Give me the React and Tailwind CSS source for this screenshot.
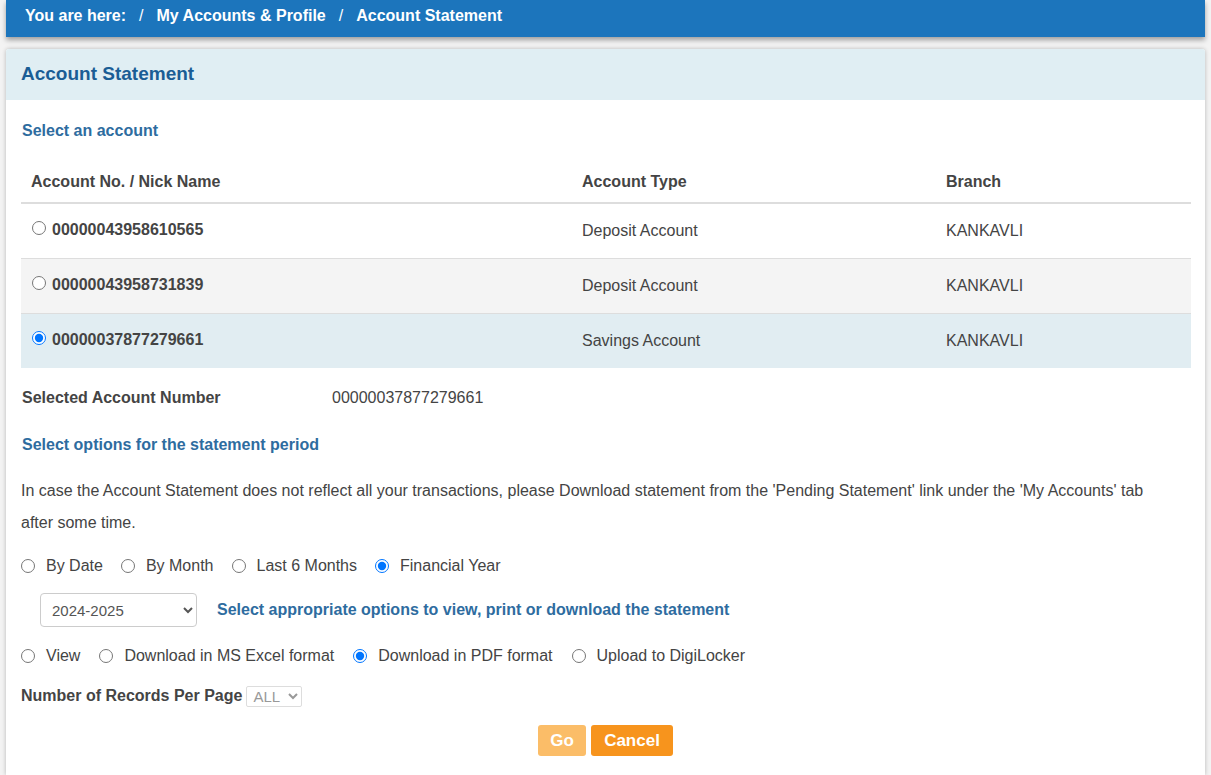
import { useState } from 'react';

const accounts = [
  { no: '00000043958610565', type: 'Deposit Account', branch: 'KANKAVLI' },
  { no: '00000043958731839', type: 'Deposit Account', branch: 'KANKAVLI' },
  { no: '00000037877279661', type: 'Savings Account', branch: 'KANKAVLI' },
];

const rowBg = ['bg-white', 'bg-[#f4f4f4]', 'bg-[#e1edf2]'];

function Radio({ checked, onChange, className = '' }) {
  return (
    <input
      type="radio"
      checked={checked}
      onChange={onChange}
      className={`m-0 h-[14px] w-[14px] shrink-0 accent-[#0075ff] ${className}`}
    />
  );
}

export default function App() {
  const [selected, setSelected] = useState(2);
  const [period, setPeriod] = useState('fy');
  const [format, setFormat] = useState('pdf');

  const periods = [
    { id: 'date', label: 'By Date' },
    { id: 'month', label: 'By Month' },
    { id: 'six', label: 'Last 6 Months' },
    { id: 'fy', label: 'Financial Year' },
  ];
  const formats = [
    { id: 'view', label: 'View' },
    { id: 'xls', label: 'Download in MS Excel format' },
    { id: 'pdf', label: 'Download in PDF format' },
    { id: 'digi', label: 'Upload to DigiLocker' },
  ];

  return (
    <div className="min-h-screen bg-[#f3f3f3] text-[#444] font-['Liberation_Sans',Arial,sans-serif] text-[16px]">
      <div className="mx-[6px] h-[37px] bg-[#1c75bc] shadow-[0_3px_5px_rgba(0,0,0,0.35)] flex items-center pl-[19px] pb-[5px] text-white font-bold text-[16px]">
        <span>You are here:</span>
        <span className="mx-[13px] font-normal">/</span>
        <span>My Accounts &amp; Profile</span>
        <span className="mx-[13px] font-normal">/</span>
        <span>Account Statement</span>
      </div>

      <div className="mx-[6px] mt-[12px] bg-white shadow-[0_0_4px_rgba(0,0,0,0.25)] rounded-t-[3px] overflow-hidden">
        <div className="h-[51px] bg-[#e0eef3] flex items-center px-[15px]">
          <h1 className="text-[19px] font-bold text-[#1a5d95]">Account Statement</h1>
        </div>

        <div className="px-[15px] pb-[19px]">
          <h2 className="mt-[21px] ml-[1px] font-bold text-[#2e6c9f] leading-[20px]">Select an account</h2>

          <table className="mt-[17px] w-[1170px] border-collapse">
            <thead>
              <tr className="h-[45px] border-b-2 border-[#dddddd] text-left">
                <th className="pl-[10px] w-[561px] font-bold align-bottom pb-[8px]">Account No. / Nick Name</th>
                <th className="w-[364px] font-bold align-bottom pb-[8px]">Account Type</th>
                <th className="font-bold align-bottom pb-[8px]">Branch</th>
              </tr>
            </thead>
            <tbody>
              {accounts.map((a, i) => (
                <tr key={a.no} className={`h-[55px] border-b border-[#dddddd] last:border-b-0 ${rowBg[i]}`}>
                  <td className="pl-[11px]">
                    <label className="flex items-center gap-[6px] font-bold -mt-[2px]">
                      <Radio checked={selected === i} onChange={() => setSelected(i)} className="-mt-[4px]" />
                      {a.no}
                    </label>
                  </td>
                  <td>{a.type}</td>
                  <td>{a.branch}</td>
                </tr>
              ))}
            </tbody>
          </table>

          <div className="mt-[20px] ml-[1px] flex leading-[20px]">
            <span className="w-[310px] font-bold">Selected Account Number</span>
            <span>{accounts[selected].no}</span>
          </div>

          <h2 className="mt-[27px] ml-[1px] font-bold text-[#2e6c9f] leading-[20px]">Select options for the statement period</h2>

          <p className="mt-[20px] leading-[32px] pr-[25px]">
            In case the Account Statement does not reflect all your transactions, please Download statement from the 'Pending Statement' link under the 'My Accounts' tab after some time.
          </p>

          <div className="mt-[16px] flex items-center leading-[22px]">
            {periods.map((p) => (
              <label key={p.id} className="flex items-center mr-[18px]">
                <Radio checked={period === p.id} onChange={() => setPeriod(p.id)} className="mr-[11px]" />
                {p.label}
              </label>
            ))}
          </div>

          <div className="mt-[16px] ml-[19px] flex items-center">
            <select className="h-[34px] w-[157px] border border-[#cccccc] rounded-[4px] bg-white px-[7px] text-[15px] text-[#555]">
              <option>2024-2025</option>
              <option>2023-2024</option>
              <option>2022-2023</option>
            </select>
            <span className="ml-[20px] font-bold text-[#2e6c9f]">Select appropriate options to view, print or download the statement</span>
          </div>

          <div className="mt-[18px] flex items-center leading-[22px]">
            {formats.map((f) => (
              <label key={f.id} className="flex items-center mr-[19px]">
                <Radio checked={format === f.id} onChange={() => setFormat(f.id)} className="mr-[11px]" />
                {f.label}
              </label>
            ))}
          </div>

          <div className="mt-[17px] flex items-center">
            <span className="font-bold mr-[4px]">Number of Records Per Page</span>
            <select disabled className="h-[21px] w-[56px] border border-[#dddddd] rounded-[2px] bg-white text-[15px] text-[#999] px-[2px]">
              <option>ALL</option>
            </select>
          </div>

          <div className="mt-[17px] flex justify-center gap-[5px]">
            <button className="h-[31px] w-[48px] rounded-[3px] bg-[#fbbd68] text-white font-bold text-[17px]">Go</button>
            <button className="h-[31px] w-[82px] rounded-[3px] bg-[#f7941d] text-white font-bold text-[17px]">Cancel</button>
          </div>
        </div>
      </div>
    </div>
  );
}
